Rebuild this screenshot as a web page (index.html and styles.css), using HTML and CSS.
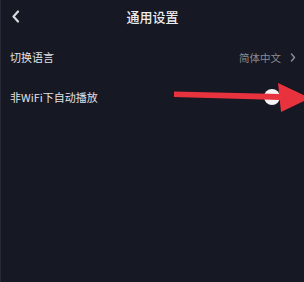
FILE: index.html
```html
<!DOCTYPE html>
<html>
<head>
    <meta name="viewport" content="width=device-width, initial-scale=1.0">
    <title>通用设置</title>
    <link rel="stylesheet" href="styles.css">
</head>
<body>
    <div class="page">
        <header class="topbar">
            <span class="back">
                <svg width="9" height="13" viewBox="0 0 9 13"><path d="M7 1.5 L2.5 6.5 L7 11.5" fill="none" stroke="#d8d9dd" stroke-width="2.2" stroke-linecap="round" stroke-linejoin="round"/></svg>
            </span>
            <h1 class="title">通用设置</h1>
            <span></span>
        </header>

        <ul class="settings">
            <li class="row">
                <span class="label">切换语言</span>
                <span class="value">简体中文
                    <svg width="6" height="9" viewBox="0 0 6 9"><path d="M1.5 1 L4.5 4.5 L1.5 8" fill="none" stroke="#8a8b91" stroke-width="1.5" stroke-linecap="round" stroke-linejoin="round"/></svg>
                </span>
            </li>
            <li class="row toggle-row">
                <span class="label">非WiFi下自动播放</span>
                <span class="knob"></span>
            </li>
        </ul>

        <svg class="arrow" width="304" height="282" viewBox="0 0 304 282">
            <polygon points="174,91.5 280,94 280,100 174,97" fill="#e8333f"/>
            <polygon points="278,83 310,98 281,112" fill="#e8333f"/>
        </svg>
    </div>
</body>
</html>
```

FILE: styles.css
```css
html, body {
    margin: 0;
    padding: 0;
    background-color: #161823;
}

body {
    font-family: "Noto Sans CJK SC", "Noto Sans", sans-serif;
    color: #e6e6e9;
}

.page {
    position: relative;
    width: 304px;
    height: 282px;
    overflow: hidden;
    box-sizing: border-box;
    border-left: 1px solid #272936;
}

.topbar {
    display: grid;
    grid-template-columns: 40px 1fr 40px;
    align-items: center;
    height: 32px;
}

.back {
    display: flex;
    align-items: center;
    padding-left: 10px;
    height: 13px;
}

.title {
    margin: 0;
    text-align: center;
    font-size: 13px;
    font-weight: 500;
    color: #ececee;
}

.settings {
    list-style: none;
    margin: 5px 0 0;
    padding: 0;
}

.row {
    display: flex;
    align-items: center;
    justify-content: space-between;
    height: 40px;
    padding: 0 8px 0 9px;
}

.label {
    font-size: 11px;
    color: #e2e2e5;
}

.value {
    display: flex;
    align-items: center;
    gap: 9px;
    font-size: 10.5px;
    color: #8a8b91;
}

.toggle-row {
    padding-right: 24px;
}

.knob {
    width: 16px;
    height: 16px;
    border-radius: 50%;
    background-color: #f4f4f4;
}

.arrow {
    position: absolute;
    left: -1px;
    top: 0;
}
```
